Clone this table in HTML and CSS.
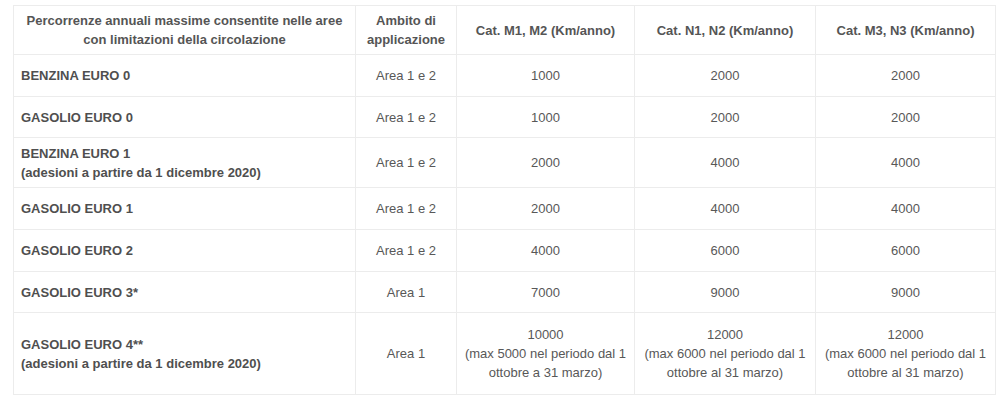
FILE: index.html
```html
<!DOCTYPE html>
<html lang="it">
<head>
<meta charset="utf-8">
<title>Percorrenze annuali</title>
<link rel="stylesheet" href="styles.css">
</head>
<body>
<div class="wrap">
<table class="km">
  <colgroup>
    <col class="c1"><col class="c2"><col class="c3"><col class="c4"><col class="c5">
  </colgroup>
  <thead>
    <tr class="r-head">
      <th>Percorrenze annuali massime consentite nelle aree<br>con limitazioni della circolazione</th>
      <th>Ambito di applicazione</th>
      <th>Cat. M1, M2 (Km/anno)</th>
      <th>Cat. N1, N2 (Km/anno)</th>
      <th>Cat. M3, N3 (Km/anno)</th>
    </tr>
  </thead>
  <tbody>
    <tr class="r-one">
      <td class="name">BENZINA EURO 0</td><td>Area 1 e 2</td><td>1000</td><td>2000</td><td>2000</td>
    </tr>
    <tr class="r-one r-short">
      <td class="name">GASOLIO EURO 0</td><td>Area 1 e 2</td><td>1000</td><td>2000</td><td>2000</td>
    </tr>
    <tr class="r-two">
      <td class="name">BENZINA EURO 1<br>(adesioni a partire da 1 dicembre 2020)</td><td>Area 1 e 2</td><td>2000</td><td>4000</td><td>4000</td>
    </tr>
    <tr class="r-one">
      <td class="name">GASOLIO EURO 1</td><td>Area 1 e 2</td><td>2000</td><td>4000</td><td>4000</td>
    </tr>
    <tr class="r-one">
      <td class="name">GASOLIO EURO 2</td><td>Area 1 e 2</td><td>4000</td><td>6000</td><td>6000</td>
    </tr>
    <tr class="r-one r-short">
      <td class="name">GASOLIO EURO 3*</td><td>Area 1</td><td>7000</td><td>9000</td><td>9000</td>
    </tr>
    <tr class="r-big">
      <td class="name">GASOLIO EURO 4**<br>(adesioni a partire da 1 dicembre 2020)</td><td>Area 1</td>
      <td>10000<br>(max 5000 nel periodo dal 1 ottobre a 31 marzo)</td>
      <td>12000<br>(max 6000 nel periodo dal 1 ottobre al 31 marzo)</td>
      <td>12000<br>(max 6000 nel periodo dal 1 ottobre al 31 marzo)</td>
    </tr>
  </tbody>
</table>
</div>
</body>
</html>
```

FILE: styles.css
```css
html, body {
  margin: 0;
  padding: 0;
  background: #fff;
}
.wrap {
  padding: 5px 5px 0 13px;
}
.km {
  width: 982px;
  border-collapse: collapse;
  table-layout: fixed;
  font-family: "Liberation Sans", Arial, sans-serif;
  font-size: 13px;
  line-height: 19px;
  color: #585858;
}
.c1 { width: 342px; }
.c2 { width: 101px; }
.c3 { width: 178px; }
.c4 { width: 181px; }
.c5 { width: 180px; }
.km th, .km td {
  border: 1px solid #ececec;
  padding: 0 7px;
  text-align: center;
  vertical-align: middle;
}
.km th {
  font-weight: bold;
  color: #555;
}
.km td.name {
  text-align: left;
  font-weight: bold;
  color: #4f4f4f;
}
.r-head { height: 49px; }
.r-one { height: 42px; }
.r-one.r-short { height: 41px; }
.r-two { height: 50px; }
.r-big { height: 82px; }
```
